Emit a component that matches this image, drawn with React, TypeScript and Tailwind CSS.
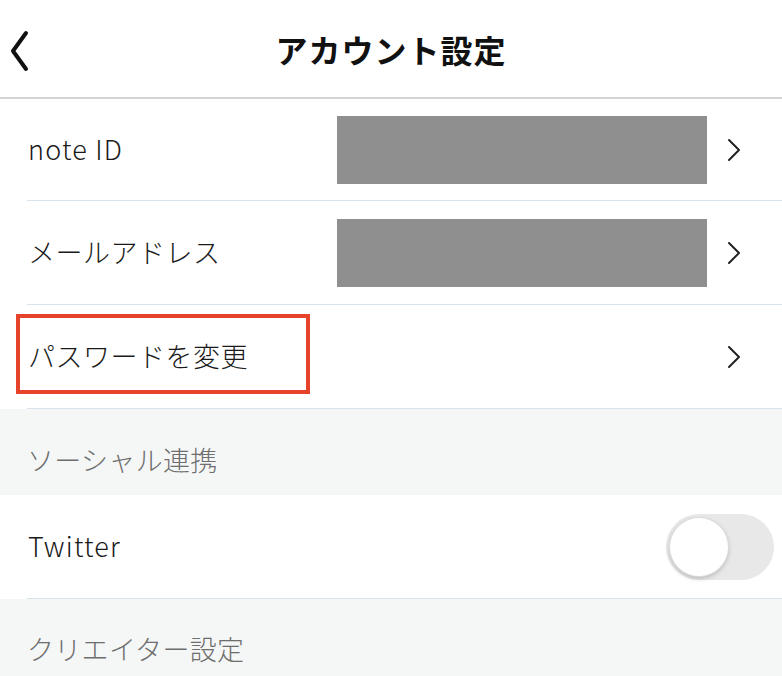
const font = { fontFamily: '"Noto Sans CJK JP", "Noto Sans", sans-serif' };

function Chevron() {
  return (
    <svg width="16" height="24" viewBox="0 0 16 24" className="shrink-0">
      <path d="M3 2 L13 12 L3 22" fill="none" stroke="#222" strokeWidth="2" strokeLinecap="round" strokeLinejoin="round" />
    </svg>
  );
}

function Row({ label, h, masked, latin, children }: any) {
  return (
    <div className="relative bg-white pl-[27px]">
      <div className={`flex items-center border-b border-[#d8e2ea] ${h}`}>
        <span className={`pl-px text-[27px] font-light text-[#1a1a1a] ${latin ? "tracking-[1.2px]" : "tracking-[0.5px]"}`}>{label}</span>
        <div className="ml-auto flex items-center">
          {masked && <div className="mr-[19px] h-[68px] w-[370px] bg-[#8f8f8f]" />}
          {children ?? (
            <div className="mr-[40px]">
              <Chevron />
            </div>
          )}
        </div>
      </div>
    </div>
  );
}

function Section({ label, h }: any) {
  return (
    <div className={`flex items-center bg-[#f5f7f7] pl-[27px] ${h}`}>
      <span className="text-[27px] font-light text-[#6e6e6e] tracking-[0.3px]">{label}</span>
    </div>
  );
}

export default function App() {
  return (
    <div className="h-[676px] w-[782px] overflow-hidden bg-white" style={font}>
      {/* header */}
      <div className="relative flex h-[99px] items-center justify-center border-b-2 border-[#d4d4d4]">
        <div className="absolute left-[8px] top-[30px]">
          <svg width="22" height="42" viewBox="0 0 22 42">
            <path d="M18 3 L5 21 L18 39" fill="none" stroke="#111" strokeWidth="4" strokeLinecap="round" strokeLinejoin="round" />
          </svg>
        </div>
        <h1 className="text-[32px] font-bold text-[#111] tracking-[1px]">アカウント設定</h1>
      </div>

      <Row label="note ID" h="h-[102px]" masked latin />
      <Row label="メールアドレス" h="h-[104px]" masked />
      <div className="relative">
        <Row label="パスワードを変更" h="h-[104px]" />
        <div className="pointer-events-none absolute left-[16px] top-[9px] h-[80px] w-[294px] border-4 border-[#e6432a]" />
      </div>

      <Section label="ソーシャル連携" h="h-[86px] pt-[16px]" />
      <Row label="Twitter" h="h-[104px]" latin>
        <div className="relative mr-[8px] h-[66px] w-[108px] rounded-full bg-[#e8e8e8]">
          <div className="absolute left-[4px] top-[4px] h-[58px] w-[58px] rounded-full bg-white shadow-[0_2px_5px_rgba(0,0,0,0.25)] ring-1 ring-[#dcdcdc]" />
        </div>
      </Row>
      <Section label="クリエイター設定" h="h-[100px]" />
    </div>
  );
}
